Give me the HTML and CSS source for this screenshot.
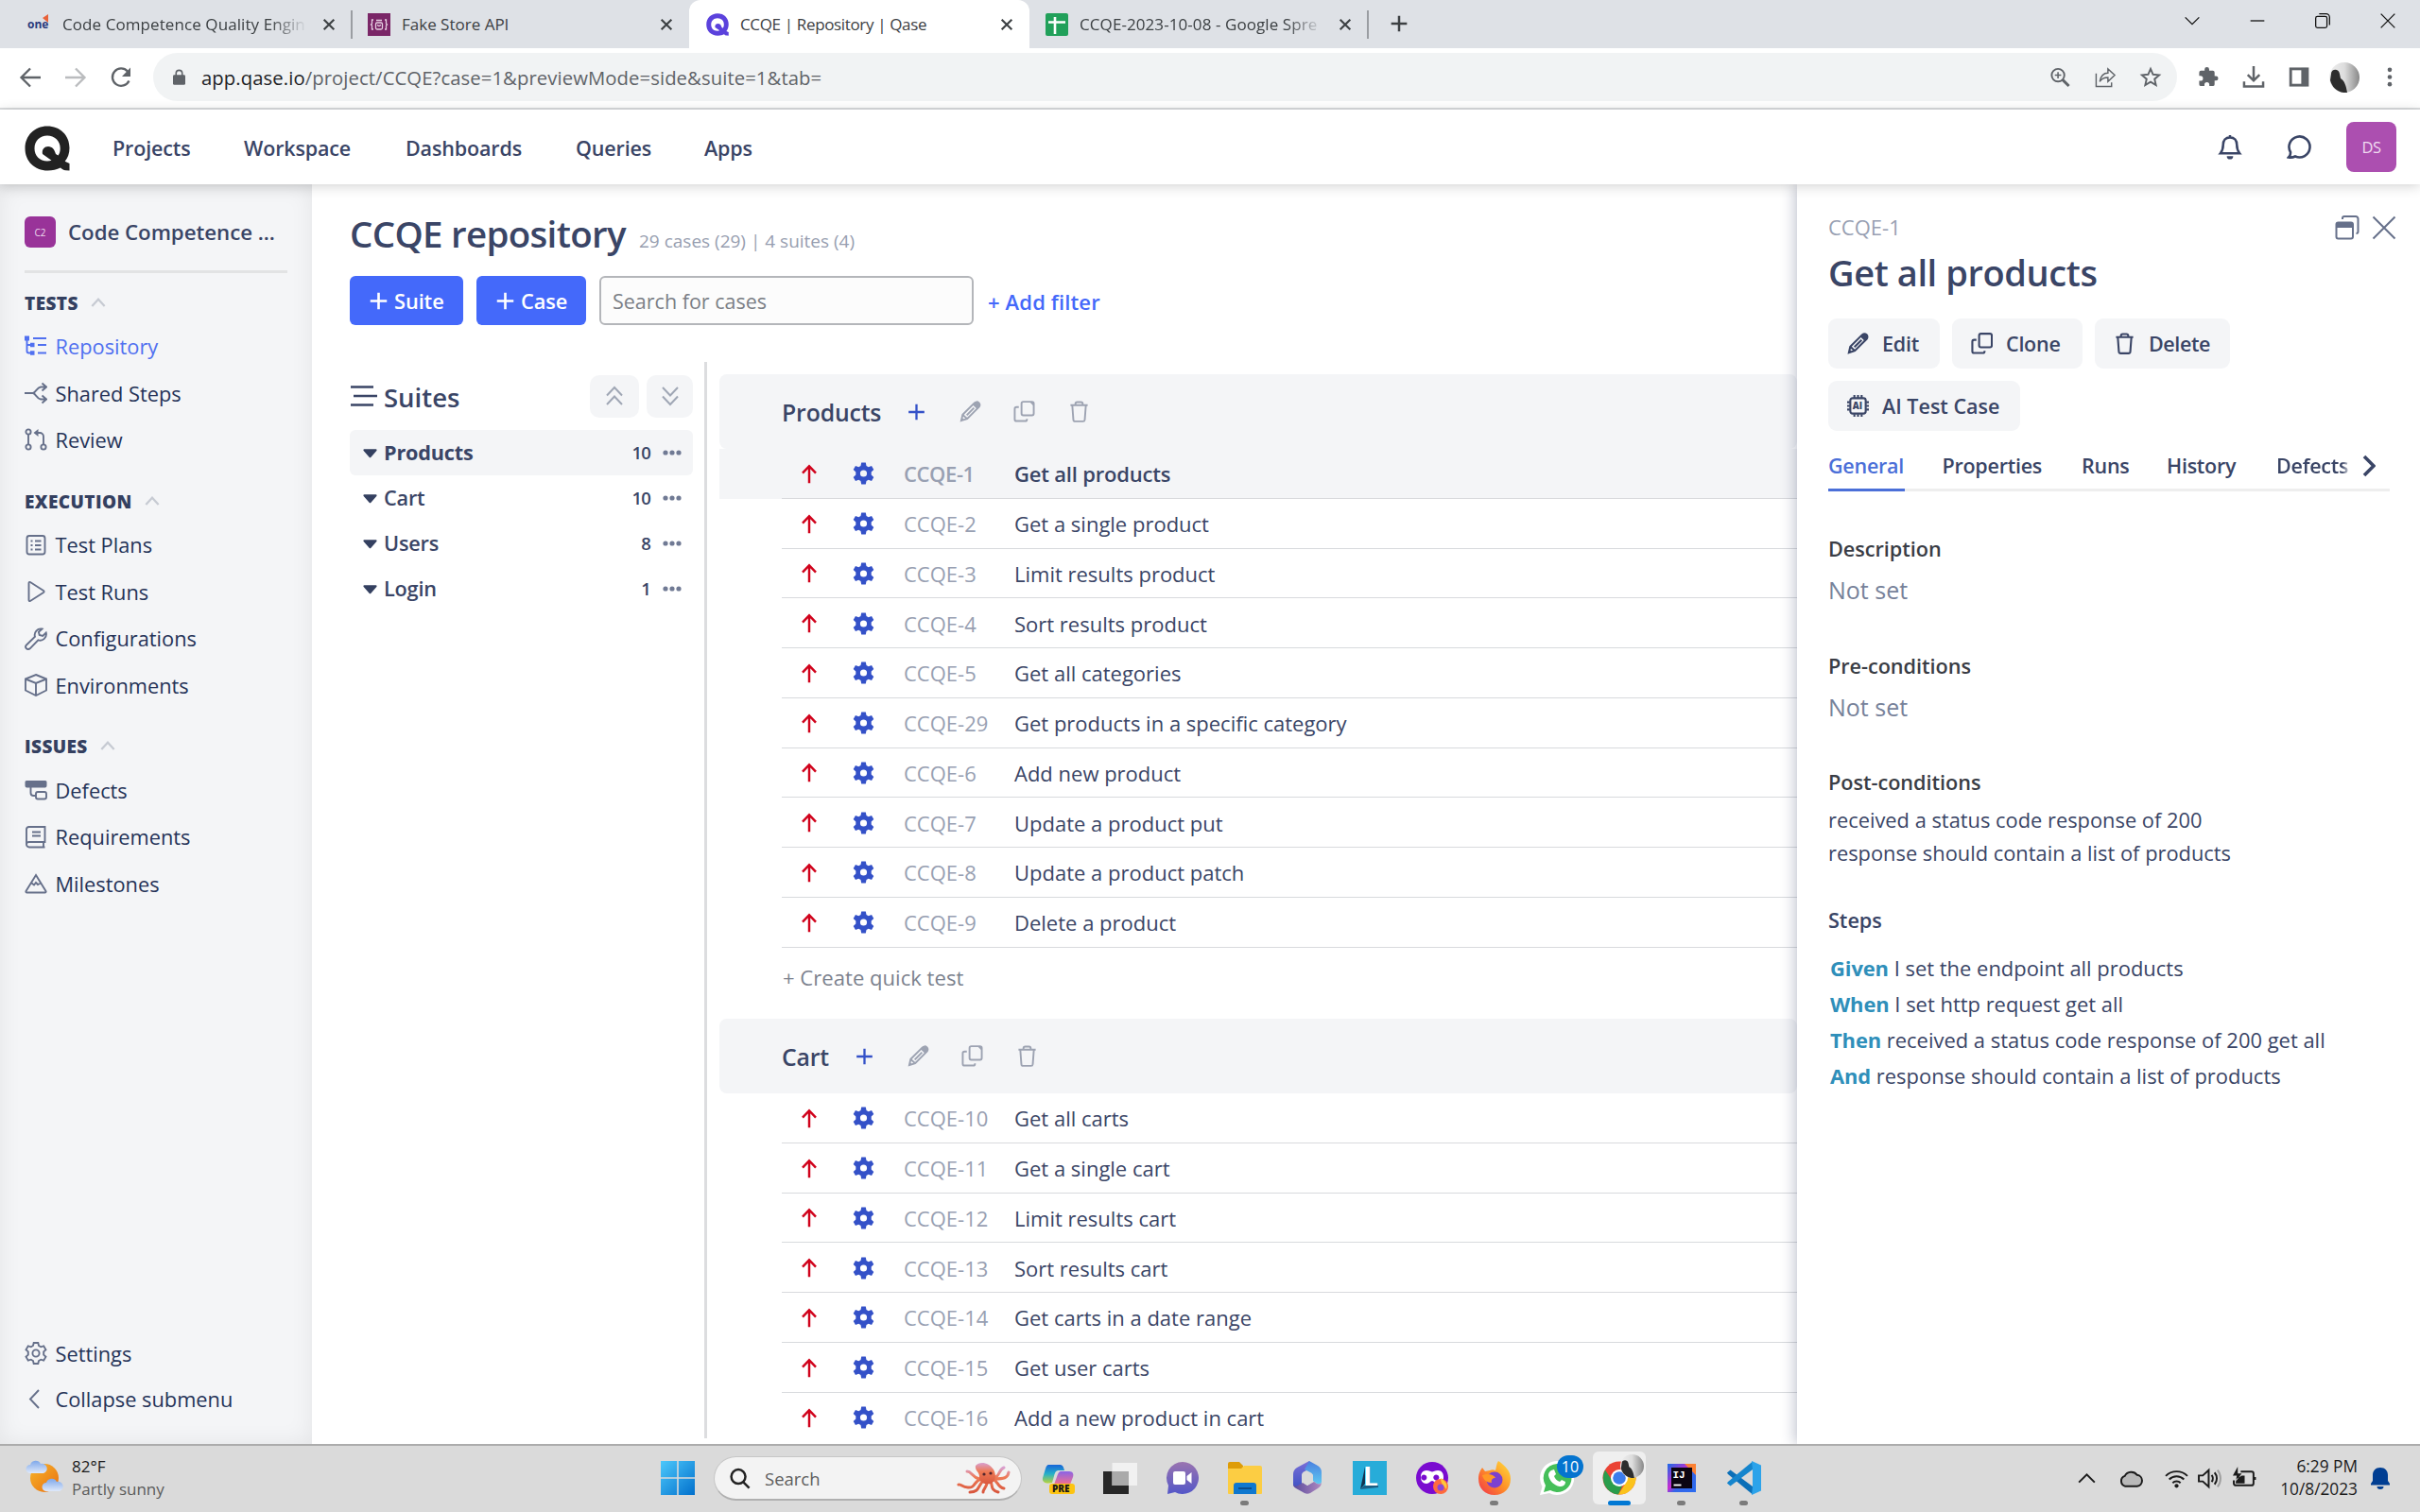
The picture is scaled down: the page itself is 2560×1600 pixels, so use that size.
FILE: index.html
```html
<!DOCTYPE html>
<html lang="en">
<head>
<meta charset="utf-8">
<title>CCQE | Repository | Qase</title>
<link rel="stylesheet" href="styles.css">
</head>
<body>
<svg class="defs" aria-hidden="true">
  <defs>
    <symbol id="x" viewBox="0 0 24 24"><path d="M4 4l16 16M20 4L4 20"/></symbol>
    <symbol id="plus" viewBox="0 0 24 24"><path d="M12 2v20M2 12h20"/></symbol>
    <symbol id="up" viewBox="0 0 24 24"><path d="M12 23V3M4 11l8-8.500 8 8.500"/></symbol>
    <symbol id="gear" viewBox="0 0 24 24"><path fill-rule="evenodd" d="M9.700 0.500h4.600l.7 3.400 2.200 1.300 3.300-1.100 2.300 4-2.600 2.300v3.200l2.600 2.300-2.300 4-3.300-1.100-2.200 1.300-.7 3.400H9.700L9 20.100l-2.200-1.300-3.300 1.100-2.300-4 2.600-2.300v-3.200L1.200 8.100l2.300-4 3.300 1.100L9 3.900zM12 8.400a3.600 3.600 0 1 0 0 7.200 3.600 3.600 0 0 0 0-7.200z"/></symbol>
    <symbol id="pencil" viewBox="0 0 24 24"><path d="M2 22l1.500-6.500L16.500 2.500a2.800 2.800 0 0 1 5 4.500L8.500 20z"/><path d="M3.500 15.500l5 4.500M8 16l8-8"/><path class="solid" d="M14.500 4.500l2-2a3 3 0 0 1 5 5l-2 2zM1.500 22.500l1-4 3 3z"/></symbol>
    <symbol id="copy" viewBox="0 0 24 24"><rect x="9" y="1.200" width="13.500" height="15" rx="2"/><path d="M6 7H3.500a2 2 0 0 0-2 2v11.500a2 2 0 0 0 2 2H13a2 2 0 0 0 2-2V20"/><path class="solid" d="M17.500 1h3a2 2 0 0 1 2 2v3z"/></symbol>
    <symbol id="trash" viewBox="0 0 24 24"><path d="M2.500 5h19M8 5V3.500a2 2 0 0 1 2-2h4a2 2 0 0 1 2 2V5M4.500 5l1.200 16a2 2 0 0 0 2 1.800h8.600a2 2 0 0 0 2-1.800l1.200-16"/></symbol>
    <symbol id="chev" viewBox="0 0 24 24"><path d="M2 18L12 7l10 11"/></symbol>
    <symbol id="tri" viewBox="0 0 16 10"><path d="M1.500 0h13a1 1 0 0 1 .8 1.700L9 9a1.300 1.300 0 0 1-2 0L.7 1.700A1 1 0 0 1 1.500 0z"/></symbol>
    <symbol id="dots" viewBox="0 0 20 6"><circle cx="3" cy="3" r="2.600"/><circle cx="10" cy="3" r="2.600"/><circle cx="17" cy="3" r="2.600"/></symbol>
    <symbol id="q" viewBox="0 0 48 48"><path fill-rule="evenodd" d="M24 .5C37.500.5 47.500 10 47.500 23.500c0 5.800-1.700 10.500-4.800 14.300L47.500 40v7.500l-4-.3c-2.500-.2-4-1.200-5.500-2.700-4 2-8.500 3-13.500 3C10.500 47.500.5 37.500.5 24S10.500.5 24 .5zM24 10.500c-7.700 0-13.500 5.500-13.500 13.500S16 37.500 24 37.500c1.700 0 3.200-.2 4.500-.8L19 30c-1-5 2-8 6-8 4.500.2 6.500 3 8 8l2.500 1.500c1.500-2 2.200-4.500 2.200-7.500 0-8-6-13.500-13.700-13.500z"/></symbol>
  </defs>
</svg>

<div class="tabstrip">
  <div class="tab tab1">
    <svg class="one" viewBox="0 0 24 24"><text x="0" y="16" class="one-text">one</text><path d="M16 5l6-4v9z" fill="#e8623a"/></svg>
    <span class="tab-title fade">Code Competence Quality Engin</span><svg class="tab-x"><use href="#x"/></svg>
  </div>
  <div class="tab tab2">
    <svg class="fav" viewBox="0 0 24 24"><rect width="24" height="24" fill="#7a2667"/><g fill="none" stroke="#e6cfe2" stroke-width="1.300"><path d="M6 7H4.500v4L3.500 12l1 1v4H6M18 7h1.500v4l1 1-1 1v4H18"/><rect x="8.500" y="10" width="7" height="7" rx="1.500"/><path d="M9 7.500h6M10.500 12c0 2 3 2 3 0"/></g></svg>
    <span class="tab-title">Fake Store API</span><svg class="tab-x"><use href="#x"/></svg>
  </div>
  <div class="tab tab3">
    <svg class="fav q-purple"><use href="#q"/></svg>
    <span class="tab-title">CCQE | Repository | Qase</span><svg class="tab-x"><use href="#x"/></svg>
  </div>
  <div class="tab tab4">
    <svg class="fav" viewBox="0 0 24 24"><rect width="24" height="24" rx="2" fill="#21a05a"/><path d="M10 4v18M3 9.500h18" stroke="#fff" stroke-width="2.600"/></svg>
    <span class="tab-title fade">CCQE-2023-10-08 - Google Spre</span><svg class="tab-x"><use href="#x"/></svg>
  </div>
  <svg class="newtab"><use href="#plus"/></svg>
  <div class="winctl">
    <svg viewBox="0 0 24 24"><path d="M4 8l8 8 8-8"/></svg>
    <svg viewBox="0 0 24 24"><path d="M4 12h16"/></svg>
    <svg viewBox="0 0 24 24"><rect x="4" y="7" width="13" height="13" rx="2"/><path d="M8 4h8a4 4 0 0 1 4 4v9"/></svg>
    <svg viewBox="0 0 24 24"><path d="M4 4l16 16M20 4L4 20"/></svg>
  </div>
</div>

<div class="toolbar">
  <svg class="nav-i" viewBox="0 0 24 24"><path d="M23 12H3M12 2.500L2.500 12l9.500 9.500"/></svg>
  <svg class="nav-i off" viewBox="0 0 24 24"><path d="M1 12h20M12 2.500l9.500 9.500-9.500 9.500"/></svg>
  <svg class="nav-i" viewBox="0 0 24 24"><path d="M20.500 15.500A9.200 9.200 0 1 1 19 5.500"/><path class="solid" d="M22 1.500v9.500h-9z"/></svg>
  <div class="omnibox">
    <svg class="lock" viewBox="0 0 14 18"><rect y="6.500" width="14" height="11.500" rx="1.500"/><path d="M3.500 8V4.800a3.500 3.500 0 0 1 7 0V8" fill="none" stroke="#5f6368" stroke-width="1.700"/></svg>
    <span class="url"><b>app.qase.io</b>/project/CCQE?case=1&amp;previewMode=side&amp;suite=1&amp;tab=</span>
    <svg class="tool" viewBox="0 0 24 24"><circle cx="10" cy="10" r="7"/><path d="M10 6.500v7M6.500 10h7" stroke-width="1.600"/><path d="M15 15l7 7" stroke-width="3"/></svg>
    <svg class="tool thin" viewBox="0 0 24 24"><path d="M2 8v14.500h17V18M6 17c1-6 4-9.500 9-9.500V3l7.500 7-7.500 7v-4.500c-4 0-7 1-9 4.500z"/></svg>
    <svg class="tool" viewBox="0 0 24 24"><path d="M12 3l2.700 6.200 6.800.6-5.100 4.500 1.500 6.600-5.900-3.500-5.900 3.500 1.500-6.600L2.500 9.800l6.800-.6z"/></svg>
  </div>
  <svg class="tool fill first" viewBox="0 0 24 24"><path d="M20.500 11H19V7a2 2 0 0 0-2-2h-4V3.500a2.500 2.500 0 0 0-5 0V5H4a2 2 0 0 0-2 2v3.800h1.500a2.700 2.700 0 0 1 0 5.400H2V20a2 2 0 0 0 2 2h3.800v-1.500a2.700 2.700 0 0 1 5.400 0V22H17a2 2 0 0 0 2-2v-4h1.500a2.500 2.500 0 0 0 0-5z"/></svg>
  <svg class="tool" viewBox="0 0 24 24"><path d="M12 0v15M5.500 9.500L12 16l6.500-6.500M1.500 17v5.500h21V17" stroke-width="2.600"/></svg>
  <svg class="tool" viewBox="0 0 24 24"><rect x="2.800" y="3" width="18.500" height="18" stroke-width="3"/><path class="solid" d="M14.500 2h6v20h-6z"/></svg>
  <div class="cell"><svg class="photo" viewBox="0 0 32 32"><defs><linearGradient id="ph"><stop offset="0" stop-color="#eee"/><stop offset=".5" stop-color="#ddd"/><stop offset="1" stop-color="#888"/></linearGradient></defs><circle cx="16" cy="16" r="16" fill="url(#ph)"/><path d="M2 12c0-5 8-6 9 0l1 5c4 2 6 8 7 15-9 1-16-5-18-13z" fill="#2d2d2d"/></svg></div>
  <svg class="tool fill" viewBox="0 0 24 24"><circle cx="12" cy="4" r="2.400"/><circle cx="12" cy="12" r="2.400"/><circle cx="12" cy="20" r="2.400"/></svg>
</div>

<header class="apphead">
  <svg class="logo"><use href="#q"/></svg>
  <nav class="topnav"><a class="n1">Projects</a><a class="n2">Workspace</a><a class="n3">Dashboards</a><a class="n4">Queries</a><a class="n5">Apps</a></nav>
  <svg class="hi" viewBox="0 0 26 28"><path d="M13 3.500c-5 0-7.500 3.500-7.500 8 0 4-1 7-3 9.500h21c-2-2.500-3-5.500-3-9.500 0-4.500-2.500-8-7.500-8zM13 1v2.500"/><path class="solid" d="M9.500 24h7a3.500 3.500 0 0 1-7 0z"/></svg>
  <svg class="hi" viewBox="0 0 28 26"><path d="M2 24c1.500-1.500 2.200-3 2-5.500A11 11 0 1 1 9 23c-2 1-4.500 1.400-7 1z"/></svg>
  <div class="user">DS</div>
</header>

<div class="app">
  <aside class="side">
    <div class="proj"><span class="badge">C2</span><span class="pname">Code Competence ...</span></div>
    <h4>TESTS<svg><use href="#chev"/></svg></h4>
    <a class="item on"><svg viewBox="0 0 24 24"><path d="M2.500 2v14.500a2 2 0 0 0 2 2H8M3 10h5M9 3h14M14 10h9M14 18.500h9"/><path class="solid" d="M0 .5h5v5H0zM6 7.800h4.500v4.500H6zM6 16.200h4.500v4.500H6z"/></svg>Repository</a>
    <a class="item"><svg viewBox="0 0 24 24"><path d="M0 12h9c3-1 4-6 8-6.500h6M9 12c3 1 4 6 8 6.500h6M18.500 1.500l4.500 4-4.500 4M18.500 14.500l4.500 4-4.500 4"/></svg>Shared Steps</a>
    <a class="item"><svg viewBox="0 0 24 24"><circle cx="4" cy="4" r="2.600"/><circle cx="4" cy="20" r="2.600"/><circle cx="20" cy="20" r="2.600"/><path d="M4 7v10M12 5h4a4 4 0 0 1 4 4v8"/><path class="solid" d="M9.500 5l5-4v8z"/></svg>Review</a>
    <h4 class="gap">EXECUTION<svg><use href="#chev"/></svg></h4>
    <a class="item"><svg viewBox="0 0 24 24"><rect x="2.500" y="2" width="19" height="19.500" rx="2.500"/><path d="M6.500 7.500h2M6.500 12h2M6.500 16.500h2M11 7.500h6.500M11 12h6.500M11 16.500h6.500"/></svg>Test Plans</a>
    <a class="item"><svg viewBox="0 0 24 24"><path d="M4.500 3v18c0 1 .7 1.400 1.500 1l14-9c.8-.6.8-1.400 0-2L6 2c-.8-.4-1.500 0-1.500 1z"/></svg>Test Runs</a>
    <a class="item"><svg viewBox="0 0 24 24"><path d="M18.500 1.500a6.500 6.500 0 0 0-7.500 8.300L2 18.500a2.600 2.600 0 0 0 3.700 3.800l8.700-9a6.500 6.500 0 0 0 8.300-7.800l-3.500 3.500-3.500-1-.8-3.200z"/></svg>Configurations</a>
    <a class="item"><svg viewBox="0 0 24 24"><path d="M12 1L23 5.500v12L12 23 1 17.500v-12zM1 5.500L12 10l11-4.500M12 10v13"/></svg>Environments</a>
    <h4 class="gap">ISSUES<svg><use href="#chev"/></svg></h4>
    <a class="item"><svg viewBox="0 0 24 24"><path class="solid" d="M2 2h20a1.500 1.500 0 0 1 1.500 1.500v4A2 2 0 0 1 22 9.500H2A2 2 0 0 1 .5 7.500v-4A1.500 1.500 0 0 1 2 2z"/><path d="M6.500 9v6a3 3 0 0 0 3 3H12"/><rect x="12" y="14" width="11" height="7.500" rx="2"/></svg>Defects</a>
    <a class="item"><svg viewBox="0 0 24 24"><path d="M21.500 22.500H5a3 3 0 0 1-3-3V3.500a2.500 2.500 0 0 1 2.500-2.500h17V17H5a2.600 2.600 0 0 0-3 2.500M20 17v5.500M8 6.500h9M8 10.500h9"/></svg>Requirements</a>
    <a class="item"><svg viewBox="0 0 24 24"><path d="M12 3l10.500 17c.4.700 0 1.500-1 1.500h-19c-1 0-1.400-.8-1-1.500zM7.500 11.500l2.500 2 2-2.500 2 2 2.800-1.500"/></svg>Milestones</a>
    <div class="foot">
      <a class="item"><svg viewBox="0 0 24 24"><path d="M9.700 1h4.600l.7 3 2.200 1.300 3-1 2.300 4-2.300 2.100v3.200l2.300 2.100-2.300 4-3-1L15 20l-.7 3H9.700L9 20l-2.200-1.300-3 1-2.300-4 2.300-2.100v-3.200L1.500 8.300l2.300-4 3 1L9 4z"/><circle cx="12" cy="12" r="3.600"/></svg>Settings</a>
      <a class="item"><svg viewBox="0 0 24 24"><path d="M15 3L6 12.500 15 22"/></svg>Collapse submenu</a>
    </div>
  </aside>

  <main class="main">
    <div class="heading"><h1>CCQE repository</h1><span>29 cases (29) | 4 suites (4)</span></div>
    <div class="actions">
      <button class="btn bs"><svg><use href="#plus"/></svg>Suite</button>
      <button class="btn bc"><svg><use href="#plus"/></svg>Case</button>
      <div class="search">Search for cases</div>
      <a class="addf">+ Add filter</a>
    </div>
    <div class="split">
      <section class="suites">
        <div class="shead"><svg class="burger" viewBox="0 0 30 24"><path d="M1 2.500h24M4 12h25M1 21.500h24"/></svg><h2>Suites</h2>
          <span class="sq s1"><svg viewBox="0 0 20 22"><path d="M2 10.500L10 2l8 8.500M2 20l8-8.500L18 20"/></svg></span><span class="sq"><svg viewBox="0 0 20 22"><path d="M2 2l8 8.500L18 2M2 11.500L10 20l8-8.500"/></svg></span></div>
        <div class="srow cur"><svg class="tri"><use href="#tri"/></svg><span>Products</span><i>10</i><svg class="dots"><use href="#dots"/></svg></div>
        <div class="srow"><svg class="tri"><use href="#tri"/></svg><span>Cart</span><i>10</i><svg class="dots"><use href="#dots"/></svg></div>
        <div class="srow"><svg class="tri"><use href="#tri"/></svg><span>Users</span><i>8</i><svg class="dots"><use href="#dots"/></svg></div>
        <div class="srow"><svg class="tri"><use href="#tri"/></svg><span>Login</span><i>1</i><svg class="dots"><use href="#dots"/></svg></div>
      </section>
      <section class="cases">
        <div class="chead"><h3 class="w1">Products</h3><svg class="add"><use href="#plus"/></svg><svg><use href="#pencil"/></svg><svg><use href="#copy"/></svg><svg><use href="#trash"/></svg></div>
        <div class="crow cur"><div><svg class="up"><use href="#up"/></svg><svg class="gear"><use href="#gear"/></svg><em>CCQE-1</em><span>Get all products</span></div></div>
        <div class="crow"><div><svg class="up"><use href="#up"/></svg><svg class="gear"><use href="#gear"/></svg><em>CCQE-2</em><span>Get a single product</span></div></div>
        <div class="crow"><div><svg class="up"><use href="#up"/></svg><svg class="gear"><use href="#gear"/></svg><em>CCQE-3</em><span>Limit results product</span></div></div>
        <div class="crow"><div><svg class="up"><use href="#up"/></svg><svg class="gear"><use href="#gear"/></svg><em>CCQE-4</em><span>Sort results product</span></div></div>
        <div class="crow"><div><svg class="up"><use href="#up"/></svg><svg class="gear"><use href="#gear"/></svg><em>CCQE-5</em><span>Get all categories</span></div></div>
        <div class="crow"><div><svg class="up"><use href="#up"/></svg><svg class="gear"><use href="#gear"/></svg><em>CCQE-29</em><span>Get products in a specific category</span></div></div>
        <div class="crow"><div><svg class="up"><use href="#up"/></svg><svg class="gear"><use href="#gear"/></svg><em>CCQE-6</em><span>Add new product</span></div></div>
        <div class="crow"><div><svg class="up"><use href="#up"/></svg><svg class="gear"><use href="#gear"/></svg><em>CCQE-7</em><span>Update a product put</span></div></div>
        <div class="crow"><div><svg class="up"><use href="#up"/></svg><svg class="gear"><use href="#gear"/></svg><em>CCQE-8</em><span>Update a product patch</span></div></div>
        <div class="crow"><div><svg class="up"><use href="#up"/></svg><svg class="gear"><use href="#gear"/></svg><em>CCQE-9</em><span>Delete a product</span></div></div>
        <div class="quick">+ Create quick test</div>
        <div class="chead"><h3 class="w2">Cart</h3><svg class="add"><use href="#plus"/></svg><svg><use href="#pencil"/></svg><svg><use href="#copy"/></svg><svg><use href="#trash"/></svg></div>
        <div class="crow"><div><svg class="up"><use href="#up"/></svg><svg class="gear"><use href="#gear"/></svg><em>CCQE-10</em><span>Get all carts</span></div></div>
        <div class="crow"><div><svg class="up"><use href="#up"/></svg><svg class="gear"><use href="#gear"/></svg><em>CCQE-11</em><span>Get a single cart</span></div></div>
        <div class="crow"><div><svg class="up"><use href="#up"/></svg><svg class="gear"><use href="#gear"/></svg><em>CCQE-12</em><span>Limit results cart</span></div></div>
        <div class="crow"><div><svg class="up"><use href="#up"/></svg><svg class="gear"><use href="#gear"/></svg><em>CCQE-13</em><span>Sort results cart</span></div></div>
        <div class="crow"><div><svg class="up"><use href="#up"/></svg><svg class="gear"><use href="#gear"/></svg><em>CCQE-14</em><span>Get carts in a date range</span></div></div>
        <div class="crow"><div><svg class="up"><use href="#up"/></svg><svg class="gear"><use href="#gear"/></svg><em>CCQE-15</em><span>Get user carts</span></div></div>
        <div class="crow"><div><svg class="up"><use href="#up"/></svg><svg class="gear"><use href="#gear"/></svg><em>CCQE-16</em><span>Add a new product in cart</span></div></div>
      </section>
    </div>
  </main>

  <section class="panel">
    <div class="ptop"><span>CCQE-1</span>
      <svg viewBox="0 0 26 26"><rect x="1.500" y="7.500" width="17.500" height="17" rx="2"/><path class="solid" d="M2 8h17v5H2z"/><path d="M8 4V3a2 2 0 0 1 2-2h12a2.500 2.500 0 0 1 2.500 2.500V17a2 2 0 0 1-2 2"/></svg>
      <svg class="pclose" viewBox="0 0 26 26"><path d="M1.500 1.500l23 23M24.500 1.500l-23 23"/></svg></div>
    <h2>Get all products</h2>
    <div class="pbtns">
      <span class="b1"><svg><use href="#pencil"/></svg>Edit</span><span class="b2"><svg viewBox="0 0 24 24"><rect x="9" y="1.200" width="14" height="15" rx="2"/><path d="M6 8H3.500a2 2 0 0 0-2 2v10.500a2 2 0 0 0 2 2H13a2 2 0 0 0 2-2V20"/></svg>Clone</span><span class="b3"><svg><use href="#trash"/></svg>Delete</span>
      <span class="b4"><svg viewBox="0 0 24 24"><rect x="3.500" y="3.500" width="17" height="17" rx="2.500"/><path d="M8 0v3M12 0v3M16 0v3M8 21v3M12 21v3M16 21v3M0 8h3M0 12h3M0 16h3M21 8h3M21 12h3M21 16h3"/><text x="6" y="15.800" class="ai">AI</text></svg>AI Test Case</span>
    </div>
    <div class="ptabs"><a class="t1">General</a><a class="t2">Properties</a><a class="t3">Runs</a><a class="t4">History</a><a class="t5">Defects</a><svg viewBox="0 0 14 24"><path d="M2 2l10 10L2 22"/></svg></div>
    <h5>Description</h5><p class="ns">Not set</p>
    <h5>Pre-conditions</h5><p class="ns">Not set</p>
    <h5>Post-conditions</h5><p class="txt">received a status code response of 200</p><p class="txt">response should contain a list of products</p>
    <h5 class="steps">Steps</h5>
    <div class="gherkin">
      <p><b>Given</b> I set the endpoint all products</p>
      <p><b>When</b> I set http request get all</p>
      <p><b>Then</b> received a status code response of 200 get all</p>
      <p><b>And</b> response should contain a list of products</p>
    </div>
  </section>
</div>

<footer class="taskbar">
  <div class="weather">
    <svg viewBox="0 0 40 36"><defs><linearGradient id="sun" x2="1" y2="1"><stop offset="0" stop-color="#f7b52c"/><stop offset="1" stop-color="#e9700f"/></linearGradient><linearGradient id="cl" x2="0" y2="1"><stop offset="0" stop-color="#7fa8ea"/><stop offset="1" stop-color="#dfe9fa"/></linearGradient></defs><circle cx="20" cy="19" r="15" fill="url(#sun)"/><path id="cloud" d="M5 14a4.500 4.500 0 0 1 0-9 6 6 0 0 1 11-1 5 5 0 0 1 3 10z" fill="url(#cl)"/><use href="#cloud" x="17" y="19"/></svg>
    <div><span class="w82">82°F</span><span class="wps">Partly sunny</span></div>
  </div>
  <div class="tb-mid">
    <div class="tcell"><svg class="i36" viewBox="0 0 36 36"><defs><linearGradient id="win" x2="1" y2="1"><stop offset="0" stop-color="#4cc8fb"/><stop offset="1" stop-color="#0270cc"/></linearGradient></defs><path fill="url(#win)" d="M0 0h17.200v17.200H0zM18.800 0H36v17.200H18.800zM0 18.800h17.200V36H0zM18.800 18.800H36V36H18.800z"/></svg></div>
    <div class="tsearch"><svg viewBox="0 0 24 24"><circle cx="10.500" cy="10" r="7.800"/><path d="M16 16l6.500 6.500"/></svg><span>Search</span>
      <svg class="octo" viewBox="0 0 58 34"><defs><linearGradient id="oc" x2="0" y2="1"><stop offset="0" stop-color="#d9a0d0"/><stop offset=".4" stop-color="#ee7a55"/><stop offset="1" stop-color="#d9573e"/></linearGradient></defs><g fill="none" stroke="url(#oc)" stroke-width="3" stroke-linecap="round"><path d="M26 18C18 20 20 28 12 27 6 27 4 23 2 24M28 20C22 26 24 32 14 32M32 20c1 6-4 8-4 12M36 20c2 6 0 10 8 12M38 18c6 2 5 9 12 10M38 16c8 1 6-8 12-10M24 18C16 16 16 10 11 10M40 18c10 0 14-1 15-7"/></g><path d="M20 4C24-1 34 0 39 8c3 6 3 12-3 15-8 2-13-3-12-8 0-4-5-6-4-11z" fill="url(#oc)"/><circle cx="29" cy="13" r="1.600" fill="#53262d"/><circle cx="36" cy="12" r="1.600" fill="#53262d"/></svg></div>
    <div class="tcell"><svg class="i36" viewBox="0 0 36 36"><defs><linearGradient id="cp" x2="0" y2="1"><stop offset="0" stop-color="#1765d8"/><stop offset=".5" stop-color="#27b0c9"/><stop offset="1" stop-color="#b8d43b"/></linearGradient><linearGradient id="cp2" x2="0" y2="1"><stop offset="0" stop-color="#8a63e6"/><stop offset="1" stop-color="#f5708e"/></linearGradient></defs><path d="M8 4h12c3 0 4 2 5 6h-6c-3 0-4 2-5 6l-2 7c-4 1-11 1-10-5l3-10c1-3 2-4 3-4z" fill="url(#cp)"/><path d="M21 11h9c4 0 5 3 4 6l-3 8H14l4-11c1-2 2-3 3-3z" fill="url(#cp2)"/><rect x="9" y="24" width="27" height="11" rx="3" fill="#fdc411"/><text class="pre" x="12" y="33">PRE</text></svg></div>
    <div class="tcell"><svg class="i36" viewBox="0 0 36 36"><path d="M0 11h27v24H0z" fill="#272727"/><path d="M9.500 2H36v24H9.500z" fill="#f4f4f4" opacity=".88"/><path d="M9.500 11H27v15H9.500z" fill="#aaa"/></svg></div>
    <div class="tcell"><svg class="i36" viewBox="0 0 36 36"><defs><linearGradient id="ch" x2="0" y2="1"><stop offset="0" stop-color="#9a74b0"/><stop offset="1" stop-color="#5457c8"/></linearGradient></defs><path d="M18 1a17 17 0 1 1-8 32l-8 2 1-9A17 17 0 0 1 18 1z" fill="url(#ch)"/><rect x="8" y="11" width="13" height="14" rx="2" fill="#fff"/><path d="M22.500 16l5-4v12l-5-4z" fill="#fff"/></svg></div>
    <div class="tcell run"><svg class="i36" viewBox="0 0 36 36"><path d="M0 3a2 2 0 0 1 2-2h10l4 4v5H0z" fill="#de9c08"/><path d="M0 8l14 0 3-3h17a2 2 0 0 1 2 2v27a1 1 0 0 1-1 1H1a1 1 0 0 1-1-1z" fill="#fccd43"/><path d="M6 35V26a3 3 0 0 1 3-3h18a3 3 0 0 1 3 3v9z" fill="#0f78cf"/><path d="M11 29h14" stroke="#0a4d8c" stroke-width="2"/></svg></div>
    <div class="tcell"><svg class="i36" viewBox="0 0 36 36"><defs><linearGradient id="m1" x2="0" y2="1"><stop offset="0" stop-color="#7a6fd8"/><stop offset="1" stop-color="#3f52c4"/></linearGradient><linearGradient id="m2" x2="0" y2="1"><stop offset="0" stop-color="#4a7fe0"/><stop offset="1" stop-color="#5fc8f0"/></linearGradient><linearGradient id="m3" x2="1" y2="0"><stop offset="0" stop-color="#5a4a9c"/><stop offset="1" stop-color="#b08ac0"/></linearGradient></defs><path d="M20 0L7 7c-3 2-4 4-4 7v11c0 2 3 4 5 3l4-3V15c0-2 1-3 3-4l6-3z" fill="url(#m1)"/><path d="M20 0l9 5c3 2 4 4 4 7v10c0 2-3 3-5 2l-4-3v-5c0-2-1-3-3-4l-6-3z" fill="url(#m2)"/><path d="M3 24c1 3 3 3 5 2l5-3 5 3 7-4 3 2c3 1 5 0 5-2 0 3-1 5-4 7l-8 5c-2 1-4 1-6 0l-9-5c-2-1-3-3-3-5z" fill="url(#m3)"/><path d="M18 11l6 4v7l-6 4-6-4v-7z" fill="#dadada"/></svg></div>
    <div class="tcell"><svg class="i36 lapp" viewBox="0 0 36 36"><path d="M0 0h36v36H0z" fill="#27acd9"/><path d="M8 30l5-24v18z" fill="#12344e"/><text class="ell" x="11" y="27">L</text><path d="M8 30l4-4h15v2z" fill="#1b5f85"/></svg></div>
    <div class="tcell"><svg class="i36" viewBox="0 0 36 36"><circle cx="18" cy="18" r="17" fill="#7a0bd0"/><path fill="#fff" fill-rule="evenodd" d="M12 10c3 0 5 1.500 6 1.500S21 10 24 10c5 0 6 4 6 7 0 4-2 7-6 7-3 0-4-3-6-3s-3 3-6 3c-4 0-6-3-6-7 0-3 1-7 6-7zm-1 5a3 3 0 1 0 .1 5 3 3 0 0 0-.1-5zm13 0a3 3 0 1 0 .1 5 3 3 0 0 0-.1-5z"/><circle cx="27" cy="27" r="8" fill="#ff6a3d"/><path d="M27 18c5 3 8 7 6 12-3-4-6-6-6-12z" fill="#ffc63a"/><circle cx="27" cy="28" r="3.500" fill="#8a46d8"/></svg></div>
    <div class="tcell run"><svg class="i36" viewBox="0 0 36 36"><defs><linearGradient id="ff" x1="1" x2="0" y2="1"><stop offset="0" stop-color="#ffe03e"/><stop offset=".5" stop-color="#ff8f26"/><stop offset="1" stop-color="#f0304e"/></linearGradient></defs><path d="M22 0c6 4 13 10 13 19 0 10-7 17-17 17S1 29 1 19c0-6 2-9 4-12l3 4 5-1c2-1 4-1 6 0 1-4 1-7 3-10z" fill="url(#ff)"/><circle cx="18" cy="20" r="8.500" fill="#7b41cf"/><path d="M5 15c6-2 12-1 14 3-3 0-5 2-4 5-5 0-9-3-10-8z" fill="#ff9826"/></svg></div>
    <div class="tcell"><svg class="i36" viewBox="0 0 36 36"><path d="M18 0a18 18 0 1 1-8 34L0 36l2.500-9A18 18 0 0 1 18 0z" fill="#fff"/><path d="M18 3a15 15 0 1 1-7 28l-7 2 2-7A15 15 0 0 1 18 3z" fill="#45bf59"/><path d="M12 10l3-1 2 5-2 2c1 3 3 5 6 6l2-2 4 2c0 4-3 5-6 5-6-1-11-6-12-12 0-2 1-4 3-5z" fill="#fff"/></svg><span class="nbadge">10</span></div>
    <div class="tcell act"><svg class="i36" viewBox="0 0 36 36"><circle cx="18" cy="18" r="17.500" fill="#ea4335"/><path d="M3 9.500a17.500 17.500 0 0 0 14 26L23 22 10 20z" fill="#2a9d4c"/><path d="M18 10h15.500A17.500 17.500 0 0 1 17 35.500L26 21z" fill="#fbc31c"/><circle cx="18" cy="18" r="9" fill="#fff"/><circle cx="18" cy="18" r="6.800" fill="#3b7ded"/></svg><svg class="mini" viewBox="0 0 32 32"><circle cx="16" cy="16" r="16" fill="url(#ph)"/><path d="M2 12c0-5 8-6 9 0l1 5c4 2 6 8 7 15-9 1-16-5-18-13z" fill="#2d2d2d"/></svg></div>
    <div class="tcell run"><svg class="i30" viewBox="0 0 30 30"><defs><linearGradient id="ij" x2="1" y2="1"><stop offset="0" stop-color="#1a6be8"/><stop offset=".45" stop-color="#c92bd0"/><stop offset=".6" stop-color="#3465e8"/><stop offset="1" stop-color="#2b6cf0"/></linearGradient></defs><path d="M0 0h30v30H0z" fill="url(#ij)"/><path d="M18 0h12v12z" fill="#fb8133"/><path d="M4 4h22v22H4z" fill="#0b0512"/><text class="ijt" x="5.500" y="15">IJ</text><path d="M6.500 22.500h8" stroke="#fff" stroke-width="1.800"/></svg></div>
    <div class="tcell run"><svg class="i36" viewBox="0 0 36 36"><path d="M0 12.500L3.500 9.500 27 27v8.500L1 14z" fill="#0b6fb8"/><path d="M0 23.500L3.500 26.500 27 9V.5L1 22z" fill="#1585cd"/><path d="M26 0l10 4.500v27L26 36l1-9V9z" fill="#2ca3ea"/></svg></div>
  </div>
  <div class="tray">
    <svg class="c1" viewBox="0 0 24 24"><path d="M4 16l8-8 8 8"/></svg>
    <svg class="c2" viewBox="0 0 24 24"><path class="cg" d="M6 20a5.500 5.500 0 0 1-.5-10.500A7.500 7.500 0 0 1 18 8.500 5.800 5.800 0 0 1 18 20z"/></svg>
    <svg class="c3" viewBox="0 0 24 24"><path d="M1 9.500a15.500 15.500 0 0 1 22 0M4.500 13a10.500 10.500 0 0 1 15 0M8 16.500a5.600 5.600 0 0 1 8 0"/><circle cx="12" cy="19.500" r="2" class="solid"/></svg>
    <svg class="c4" viewBox="0 0 24 24"><path d="M1 9h4l6-5.500v17L5 15H1zM14 8.500c1.500 2 1.500 5 0 7M17 6c3 3.500 3 8.500 0 12"/><path d="M20 3.500c4 5 4 12 0 17" opacity=".3"/></svg>
    <svg class="c5" viewBox="0 0 24 24"><path d="M8 5h11a2 2 0 0 1 2 2v10a2 2 0 0 1-2 2H3a2 2 0 0 1-2-2v-3M22.500 10.500v3"/><path class="solid" d="M5 0L0 9h4l-1 6 6-8H5zM3 13l6-4h3v8H3z"/></svg>
    <div class="clock"><span class="k1">6:29 PM</span><span class="k2">10/8/2023</span></div>
    <svg class="bell" viewBox="0 0 20 23"><path d="M10 0C5 0 2 3.500 2 8v6L0 17v1.500h20V17l-2-3V8c0-4.500-3-8-8-8zM6.500 20h7a3.500 3 0 0 1-7 0z"/></svg>
  </div>
</footer>
</body>
</html>
```
FILE: styles.css
```css
* { box-sizing: border-box; margin: 0; padding: 0; }
body {
  width: 2560px; height: 1600px; overflow: hidden; background: #fff;
  display: flex; flex-direction: column;
  font-family: "Open Sans", "Noto Sans", sans-serif; font-size: 22px; color: #3a4566;
}
svg { display: block; flex: none; fill: none; stroke: currentColor; stroke-width: 2; }
svg .solid { fill: currentColor; stroke: none; }
span, a, p, h1, h2, h3, h4, h5, em { white-space: nowrap; }
.defs { width: 0; height: 0; position: absolute; }

/* browser tabs */
.tabstrip { height: 51px; background: #dee1e6; display: flex; flex: none; color: #3c4043; }
.tab { height: 51px; display: flex; align-items: center; font-size: 17px; padding-right: 16px; }
.tab1 { width: 373px; padding-left: 29px; }
.tab2 { width: 356px; padding-left: 16px; }
.tab3 { width: 360px; padding-left: 18px; background: #fff; border-radius: 12px 12px 0 0; letter-spacing: -.35px; }
.tab4 { width: 359px; padding-left: 17px; }
.tab1 .tab-title, .tab4 .tab-title { letter-spacing: .08px; }
.tab1::after, .tab4::after { content: ""; width: 2px; height: 30px; background: #9a9da2; margin-left: 15px; margin-right: -16px; }
.tab .fav { width: 24px; height: 24px; margin-right: 12px; stroke: none; }
.tab .one { width: 24px; height: 24px; margin-right: 13px; stroke: none; }
.one-text { font: 700 12px "Open Sans", sans-serif; fill: #2b3a7c; }
.q-purple { fill: #5b42dc; }
.tab-title { flex: 1; min-width: 0; margin-right: 15px; }
.fade { -webkit-mask: linear-gradient(90deg, #000 85%, transparent); mask: linear-gradient(90deg, #000 85%, transparent); }
.tab-x { width: 16px; height: 16px; stroke-width: 3.200; }
.newtab { width: 20px; height: 20px; margin: 15px 0 0 22px; stroke-width: 3; }
.winctl { margin-left: auto; display: flex; color: #111; }
.winctl svg { width: 22px; height: 22px; margin: 11px 23px 0 24px; stroke-width: 1.400; }

/* toolbar */
.toolbar { height: 65px; flex: none; display: flex; align-items: center; padding: 1px 8px 3px 20px; border-bottom: 2px solid #dadcde; color: #5f6368; }
.nav-i { width: 24px; height: 24px; margin-right: 24px; stroke-width: 2.300; }
.nav-i:nth-child(3) { margin-right: 22px; }
.nav-i.off { color: #babcbe; }
.omnibox { flex: 1; height: 51px; border-radius: 26px; background: #f1f3f4; display: flex; align-items: center; padding: 0 4px 0 21px; }
.lock { width: 13px; height: 17px; fill: #5f6368; stroke: none; margin-right: 17px; }
.url { flex: 1; font-size: 20.300px; letter-spacing: .08px; }
.url b { font-weight: 400; color: #202124; }
.tool { width: 48px; height: 23px; }
.tool.thin { stroke-width: 1.500; }
.tool.fill { fill: currentColor; stroke: none; }
.tool.first { margin-left: 9px; }
.cell { width: 48px; display: flex; justify-content: center; }
.photo { width: 32px; height: 32px; stroke: none; }

/* product header */
.apphead { height: 79px; flex: none; display: flex; align-items: center; padding: 0 25px 0 26px; position: relative; z-index: 3; background: #fff; box-shadow: 0 2px 12px rgba(0,0,0,.18); }
.logo { width: 48px; height: 48px; fill: #222; stroke: none; margin-top: 2px; }
.topnav { display: flex; flex: 1; margin-left: 45px; font-weight: 600; font-size: 21.500px; letter-spacing: -.15px; padding-top: 2px; }
.n1 { width: 139px; } .n2 { width: 171px; } .n3 { width: 180px; } .n4 { width: 136px; }
.hi { width: 28px; height: 27px; stroke-width: 2.600; margin-right: 46px; }
.hi + .hi { margin-right: 35px; }
.user { width: 53px; height: 53px; border-radius: 8px; background: #ac4fb0; color: #f0dcf1; font-size: 16.500px; letter-spacing: -.4px; display: flex; align-items: center; justify-content: center; }

.app { flex: 1; min-height: 0; display: flex; overflow: hidden; }

/* sidebar */
.side { width: 330px; background: #f4f5f7; box-shadow: inset 0 0 24px rgba(0,0,0,.07); padding: 22px 26px 0; display: flex; flex-direction: column; color: #253358; }
.proj { height: 72px; width: 278px; border-bottom: 3px solid #e2e3e4; display: flex; align-items: center; padding-bottom: 12px; margin-bottom: 8px; }
.badge { width: 33px; height: 33px; border-radius: 6px; background: #993399; color: #eddcee; font-size: 10px; display: flex; align-items: center; justify-content: center; margin-right: 13px; }
.pname { font-size: 22.300px; font-weight: 600; color: #3a4566; letter-spacing: -.05px; }
.side h4 { height: 49px; line-height: 49px; margin-bottom: -4px; font-size: 19px; font-weight: 800; color: #344060; display: flex; align-items: center; letter-spacing: .4px; }
.side h4 svg { width: 16px; height: 16px; margin: -3px 0 0 13px; color: #c7cbd3; stroke-width: 3.400; }
.side h4.gap { margin-top: 18px; margin-bottom: -2px; height: 46px; }
.side .item { height: 49.400px; display: flex; align-items: center; font-size: 21.800px; }
.side .item svg { width: 24px; height: 24px; margin-right: 8.500px; color: #66708a; stroke-width: 1.900; }
.side .item.on, .side .item.on svg { color: #5070f0; }
.foot { margin-top: auto; padding-bottom: 24px; }
.foot .item { height: 48px; }

/* main */
.main { width: 1571px; padding-left: 40px; display: flex; flex-direction: column; overflow: hidden; }
.heading { height: 97px; flex: none; display: flex; align-items: baseline; padding-top: 26px; }
.heading h1 { font-size: 38.500px; font-weight: 600; letter-spacing: -.7px; width: 306px; line-height: 52px; }
.heading span { font-size: 19px; }
.heading span { color: #979eb0; }
.actions { height: 52px; flex: none; display: flex; font-weight: 600; }
.btn { border: 0; border-radius: 6px; background: #4469fa; color: #fff; font: 600 21.800px "Open Sans", sans-serif; display: flex; align-items: center; padding-left: 20px; margin-right: 14px; letter-spacing: -.1px; }
.btn svg { width: 21px; height: 21px; margin-right: 6px; stroke-width: 3; }
.bs { width: 120px; } .bc { width: 116px; }
.search { width: 396px; border: 2px solid #b4b6ba; border-radius: 6px; background: #fcfcfc; color: #7b7f86; font-weight: 400; font-size: 21.500px; line-height: 49px; padding-left: 12px; margin-right: 15px; }
.addf { color: #4469fa; line-height: 55px; letter-spacing: .15px; }
.split { margin-top: 39px; height: 1139px; display: flex; overflow: hidden; }
.suites { width: 378px; border-right: 3px solid #dcdddf; padding-right: 12px; }
.shead { display: flex; align-items: center; height: 72px; }
.burger { width: 30px; height: 24px; stroke-width: 2.600; }
.shead h2 { font-size: 27.500px; font-weight: 600; margin-left: 6px; margin-right: auto; padding-top: 2px; }
.sq { width: 49px; height: 45px; border-radius: 10px; background: #f4f5f7; color: #a0a7b5; display: flex; align-items: center; justify-content: center; }
.sq.s1 { width: 52px; margin-right: 8px; }
.sq svg { width: 20px; height: 22px; }
.srow { height: 48px; display: flex; align-items: center; padding: 0 12px 1px 14px; border-radius: 6px; font-weight: 600; letter-spacing: -.2px; }
.srow.cur { background: #f4f5f7; }
.srow.cur span { font-weight: 700; }
.srow span { margin-left: 7px; flex: 1; font-size: 21.700px; }
.srow i { font-style: normal; font-size: 18.500px; margin-right: 13px; letter-spacing: -.8px; }
.tri { width: 15px; height: 10px; fill: #344060; stroke: none; margin-top: 2px; }
.dots { width: 20px; height: 6px; fill: #707a94; stroke: none; }

.cases { flex: 1; padding: 13px 0 0 13px; }
.chead { height: 79px; background: #f4f5f7; border-radius: 8px; display: flex; align-items: center; padding-left: 66px; color: #9da3b2; }
.chead h3 { font-size: 24.800px; font-weight: 600; color: #3a4566; padding-top: 1px; letter-spacing: -.15px; }
.w1 { width: 114px; } .w2 { width: 59px; }
.chead svg { width: 23px; height: 23px; margin-right: 34.500px; }
.chead .add { width: 57px; height: 20px; color: #3451c8; stroke-width: 2.800; margin-right: 16.500px; }
.chead svg:not(.add):last-child { margin: 0; }
.crow { height: 52.750px; padding-left: 66px; }
.crow.cur { background: #f4f5f7; }
.crow.cur span { font-weight: 600; letter-spacing: -.2px; }
.crow > div { height: 100%; border-bottom: 1px solid #d8dadd; display: flex; align-items: center; padding-top: 1px; }
.crow:last-child > div { border: 0; }
.up { width: 58px; height: 21px; color: #d0021b; stroke-width: 2.800; }
.gear { width: 57px; height: 24px; fill: #3451c8; stroke: none; }
.crow em { width: 117px; margin-left: 14px; font-style: normal; color: #98a0b2; }
.crow.cur em { font-weight: 600; letter-spacing: -.4px; }
.quick { height: 75.500px; line-height: 63px; padding-left: 67px; font-size: 22.100px; color: #7c828e; }

/* preview panel */
.panel { width: 659px; background: #fff; padding: 0 25px 0 33px; box-shadow: -2px 0 14px rgba(40,50,90,.3); position: relative; z-index: 2; }
.ptop { height: 60px; padding-top: 30px; display: flex; color: #66708a; }
.ptop span { flex: 1; color: #98a0b2; line-height: 30px; font-size: 22px; }
.ptop svg { width: 26px; height: 26px; margin-top: 3px; }
.pclose { margin-left: 13px; }
.panel h2 { font-size: 38px; font-weight: 600; letter-spacing: -.4px; line-height: 67px; height: 68px; }
.pbtns { margin-top: 14px; display: flex; flex-wrap: wrap; gap: 13px; font-weight: 600; font-size: 21.500px; letter-spacing: -.25px; }
.pbtns span { height: 53px; border-radius: 9px; background: #f4f5f7; display: flex; align-items: center; padding-left: 20px; }
.pbtns svg { width: 23px; height: 23px; margin-right: 14px; stroke-width: 2.200; }
.pbtns .b3 { letter-spacing: -.4px; }
.pbtns .b4 { letter-spacing: 0; }
.b1 { width: 118px; } .b2 { width: 138px; } .b3 { width: 143px; } .b4 { width: 203px; }
.ai { font: 800 10px "Open Sans", sans-serif; fill: currentColor; stroke: none; }
.ptabs { width: 594px; height: 64px; border-bottom: 3px solid #eee; display: flex; line-height: 73px; font-weight: 600; font-size: 21.500px; letter-spacing: -.25px; }
.t1 { width: 81px; height: 64px; margin-right: 39.500px; border-bottom: 3px solid #4b6fd8; color: #4b6fd8; }
.t2 { width: 147.500px; } .t3 { width: 90px; } .t4 { width: 116px; }
.t5 { width: 91px; -webkit-mask: linear-gradient(90deg, #000 76%, transparent 87%); mask: linear-gradient(90deg, #000 76%, transparent 87%); }
.ptabs svg { width: 14px; height: 24px; margin-top: 25px; stroke-width: 3.600; }
.panel h5 { font-size: 21.700px; font-weight: 600; letter-spacing: -.05px; color: #3a3d45; line-height: 30px; margin-top: 45px; }
.ptabs + h5 { margin-top: 46px; }
.ns { font-size: 25px; line-height: 34px; color: #77829a; margin-top: 11px; padding-bottom: 4px; }
.ns + h5 { margin-top: 44.500px; }
.txt { font-size: 21.850px; line-height: 35px; }
h5 + .txt { margin-top: 7px; }
.panel .steps { margin-top: 39px; color: #3a4566; }
.gherkin { margin: 17px 0 0 2px; }
.gherkin p { line-height: 38px; font-size: 21.950px; }
.gherkin b { color: #2f8fba; letter-spacing: -.1px; }

/* taskbar */
.taskbar { height: 72px; flex: none; background: #dadada; border-top: 2px solid #acacac; display: flex; font-size: 17px; color: #1b1b1b; position: relative; z-index: 4; }
.weather { width: 684px; display: flex; padding: 15px 0 0 27px; }
.weather svg { width: 40px; height: 36px; margin-right: 9px; stroke: none; }
.weather span { display: block; line-height: 24px; }
.weather > div { margin-top: -5px; }
.wps { color: #5b5b5b; }
.tb-mid { display: flex; }
.tb-mid svg { stroke: none; }
.tcell { width: 66px; height: 70px; display: flex; align-items: center; justify-content: center; padding-bottom: 2px; position: relative; }
.i36 { width: 36px; height: 36px; }
.i30 { width: 30px; height: 30px; }
.lapp { overflow: visible; }
.run::after { content: ""; position: absolute; left: 28px; top: 58px; width: 9px; height: 5px; border-radius: 3px; background: #7b7b7b; }
.act::before { content: ""; position: absolute; left: 5px; top: 6px; width: 56px; height: 56px; border-radius: 6px; background: #efefef; }
.act::after { content: ""; position: absolute; left: 21px; top: 58px; width: 24px; height: 5px; border-radius: 3px; background: #0078d4; }
.act svg { position: relative; }
.tb-mid .act .mini { position: absolute; left: 34px; top: 9px; width: 25px; height: 25px; }
.nbadge { position: absolute; left: 33px; top: 10px; width: 28px; height: 24px; border-radius: 12px; background: #0474cf; color: #fff; font-size: 16px; line-height: 24px; text-align: center; }
.tsearch { width: 326px; height: 47px; margin: 11px 5px 0 5px; border-radius: 24px; background: #f3f3f3; border: 1px solid #c6c6c6; border-bottom: 2px solid #b0b0b0; display: flex; align-items: center; color: #5e5e5e; font-size: 18.500px; }
.tsearch svg { width: 23px; height: 23px; margin: 0 15px; stroke: #222; stroke-width: 2.600; }
.tsearch span { flex: 1; }
.tsearch .octo { width: 58px; height: 34px; margin: 0 10px 0 0; stroke: none; }
.pre { font: 800 10px "Open Sans", sans-serif; fill: #1a1a1a; }
.ell { font: 700 28px "Open Sans", sans-serif; fill: #fff; }
.ijt { font: 700 11px "Liberation Mono", monospace; fill: #fff; }
.tray { margin-left: auto; display: flex; align-items: center; padding: 0 32px 2px 0; }
.tray svg { width: 25px; height: 25px; stroke-width: 1.900; }
.c1 { margin-right: 22px; } .c2 { margin-right: 23px; } .c3 { margin-right: 10px; } .c4 { margin-right: 12px; }
.c5 { margin-right: 21px; }
.cg { fill: #b9b9b9; }
.clock { width: 86px; text-align: right; font-size: 17.300px; }
.clock span { display: block; line-height: 24px; }
.tray .bell { width: 20px; height: 23px; margin-left: 14px; fill: #003e92; stroke: none; }
```
